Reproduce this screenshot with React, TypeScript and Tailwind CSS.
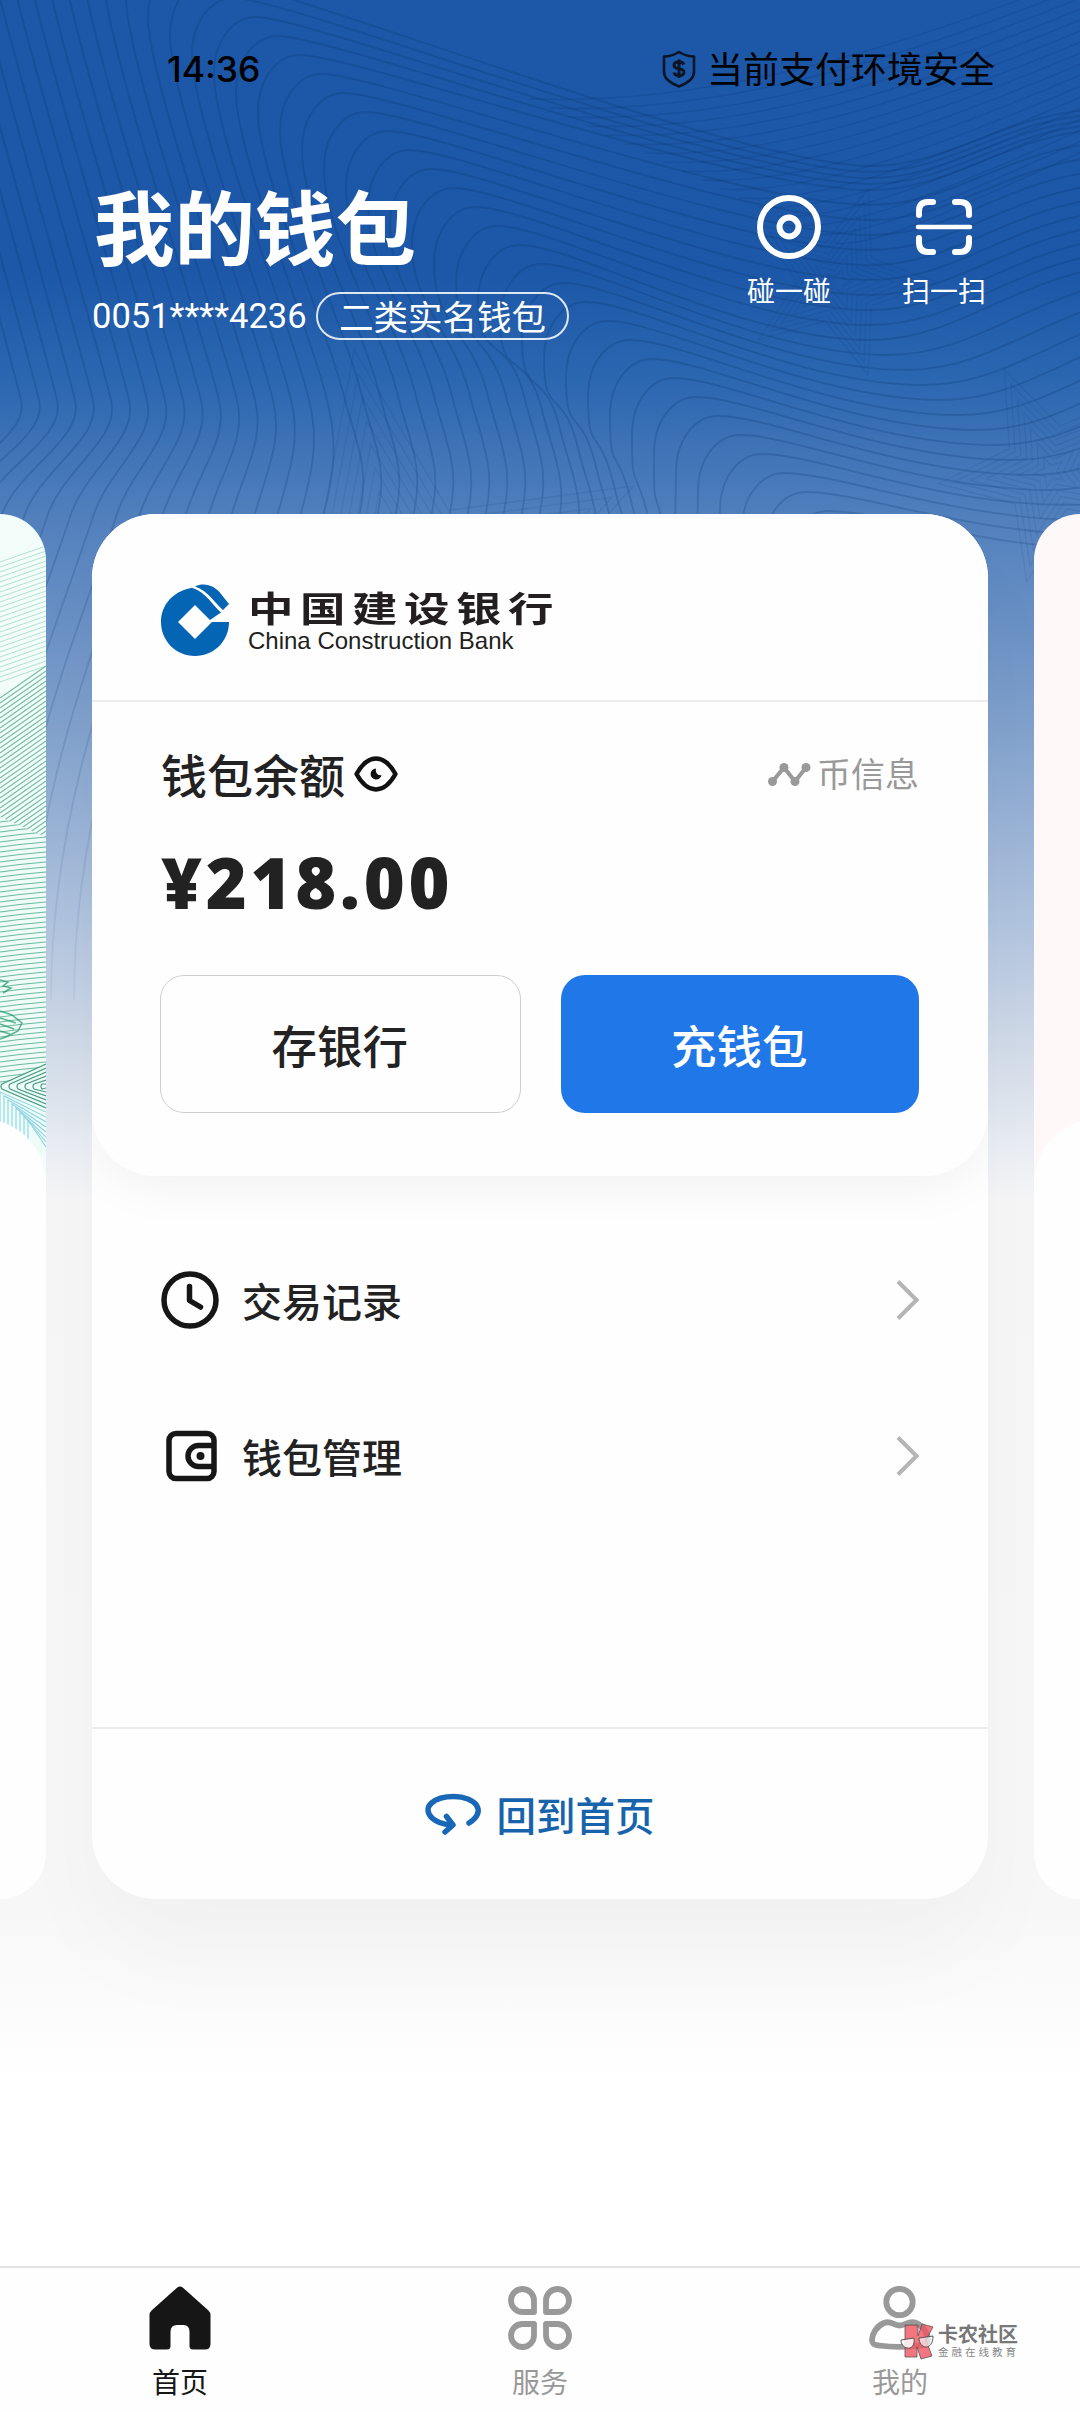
import React from 'react';

interface MenuRowProps {
  icon: React.ReactNode;
  label: string;
}

interface TabProps {
  icon: React.ReactNode;
  label: string;
  active?: boolean;
}

const range = (from: number, to: number) =>
  Array.from({ length: to - from + 1 }, (_, i) => from + i);

// Ridge contours: one arch per index, shifted along the diagonal
const ridgePath = (i: number) => {
  const px = 300 + 22 * i;
  const py = 55 + 19 * i;
  const x4 = 345 + 18 * i;
  const x5 = i < 0 ? x4 + 5 * i : x4 + 13;
  const y4 = Math.max(400, py + 150);
  const left = [
    `M${x5 - 110} 1000`,
    `C${x5 - 110} 800 ${x5 - 40} 640 ${x5} ${y4 + 120}`,
    `C${x5 + 14} ${y4 + 70} ${x4 + 10} ${y4 + 40} ${x4} ${y4}`,
    `C${x4 - 16} ${y4 - 70} ${px - 42} ${py + 120} ${px - 42} ${py + 57}`,
    `C${px - 42} ${py + 22} ${px - 22} ${py} ${px} ${py}`,
  ].join('');
  // the outer ridges leave the screen before they turn
  if (i < -4) return left;

  const sag = i < 0 ? 190 + 6 * i : 190 + 15 * i;
  const sagX = 870 + Math.max(0, i - 10) * 18;
  return `${left}C${px + 55} ${py} ${sagX - 130} ${sag} ${sagX} ${sag}C${sagX + 80} ${sag} ${sagX + 130} ${sag - 50} ${sagX + 220} ${sag - 60 - i}`;
};

// Tight lines that sweep up to the top right corner
const sweepPath = (j: number) =>
  `M${530 + 19 * j} ${99 + 9 * j}C${680 + 12 * j} ${104 + 9 * j} ${850 + 6 * j} ${70 + 9 * j} 1090 ${-28 + 11 * j}`;

const starPoints = (cx: number, cy: number, r: number, start: number) =>
  range(0, 9)
    .map(k => {
      const angle = ((start + k * 36) * Math.PI) / 180;
      const radius = k % 2 === 0 ? r : r * 0.42;
      return `${(cx + radius * Math.cos(angle)).toFixed(1)},${(cy + radius * Math.sin(angle)).toFixed(1)}`;
    })
    .join(' ');

const HeaderPattern: React.FC = () => (
  <svg className="absolute inset-x-0 top-0" width="1080" height="1200" viewBox="0 0 1080 1200" fill="none">
    <defs>
      <linearGradient id="fade" x1="0" y1="0" x2="0" y2="1">
        <stop offset="0.25" stopColor="#fff" />
        <stop offset="0.95" stopColor="#fff" stopOpacity="0" />
      </linearGradient>
      <mask id="fade-mask">
        <rect width="1080" height="1200" fill="url(#fade)" />
      </mask>
    </defs>
    <g mask="url(#fade-mask)">
      <g stroke="#0f3d78" strokeOpacity="0.32" strokeWidth="1.8">
        {range(-18, 24).map(i => <path key={i} d={ridgePath(i)} />)}
      </g>
      <g stroke="#0f3d78" strokeOpacity="0.22" strokeWidth="1.5">
        {range(0, 16).map(j => <path key={j} d={sweepPath(j)} />)}
      </g>
      <g stroke="#123f7c" strokeOpacity="0.16" strokeWidth="1.3">
        {range(1, 7).map(k => <polygon key={k} points={starPoints(838, 282, 14 * k, -72)} />)}
        {range(1, 7).map(k => <polygon key={k} points={starPoints(1050, 472, 16 * k, -114)} />)}
        {range(4, 11).map(k => <polygon key={k} points={starPoints(400, 610, 24 * k, -100)} />)}
      </g>
    </g>
  </svg>
);

// Guilloche artwork on the card that peeks in from the left
const GreenPattern: React.FC = () => (
  <svg className="absolute right-0 top-0" width="46" height="640" viewBox="0 0 46 640" fill="none">
    <clipPath id="waves">
      <path d="M0 303L46 323V552L0 573Z" />
    </clipPath>
    <g stroke="#9ad3c2" strokeWidth="1" strokeOpacity="0.7">
      {range(0, 24).map(i => <path key={i} d={`M0 ${48 + i * 5}L46 ${32 + i * 5}`} />)}
    </g>
    <g stroke="#4fa88b" strokeWidth="1.1" strokeOpacity="0.75">
      {range(0, 35).map(i => <path key={i} d={`M0 ${184 + i * 5}L46 ${152 + i * 5}`} />)}
    </g>
    <g clipPath="url(#waves)">
      <rect y="300" width="46" height="280" fill="#edfcf6" />
      <g stroke="#4fa88b" strokeWidth="1.1" strokeOpacity="0.8">
        {range(0, 54).map(i => <path key={i} d={`M0 ${308 + i * 5}Q22 ${305 + i * 5} 46 ${303 + i * 5}`} />)}
      </g>
    </g>
    <path d="M0 466l8 2-5 4 8 2-8 5M0 497l12 4 10 8-4 8-12 6-6 2M0 504l16 5M0 510l14 5M0 517l10 3" stroke="#1d9468" strokeWidth="1.5" strokeOpacity="0.7" />
    <path d="M0 572L46 550V640H0Z" fill="#edfcf6" />
    <g stroke="#4a9c84" strokeWidth="1.2">
      {range(0, 5).map(i => <path key={i} d={`M46 ${550 + i * 4}L${2 + i * 8} 570Q${i * 8} 572 ${2 + i * 8} 575L46 ${594 - i * 4}`} />)}
    </g>
    <g stroke="#8fd3e4" strokeWidth="1.1">
      {range(0, 7).map(i => <path key={i} d={`M${i * 4} 640V${578 + i * 4}L46 ${598 + i * 5}`} />)}
    </g>
  </svg>
);

const BankLogo: React.FC = () => (
  <svg className="shrink-0" width="68" height="72" viewBox="0 0 68 72">
    <path
      d="M28 4.500C12 8 0 21 0 38C0 57 15 72 34 72C53 72 68 57 68 38H51L34 55L17 38L34 21L49 36L60 28.500C52 22 45 8 31 3.800Z"
      fill="#0565b5"
    />
    <path d="M34 2.500C44-2 54 2 60 10L68 20L62 26C54 19 47 7 34 2.500Z" fill="#0565b5" />
  </svg>
);

const EyeIcon: React.FC = () => (
  <svg width="44" height="36" viewBox="0 0 44 36" fill="none">
    <path
      d="M2.500 18C7 10 13 2.500 22 2.500S37 10 41.500 18C37 26 31 33.500 22 33.500S7 26 2.500 18Z"
      stroke="#111"
      strokeWidth="4.400"
      strokeLinejoin="round"
    />
    <path d="M22 12.500A5.500 5.500 0 1 0 27.500 19C24 20 21 17 22 12.500Z" fill="#111" />
  </svg>
);

const TrendIcon: React.FC = () => (
  <svg width="44" height="25" viewBox="0 0 44 25" fill="#999">
    <path d="M5.500 19.500L17 5.500L28 19.500L39 5.500" fill="none" stroke="#999" strokeWidth="4" />
    <circle cx="5.500" cy="19.500" r="4.500" />
    <circle cx="17" cy="5.500" r="4.500" />
    <circle cx="28" cy="19.500" r="4.500" />
    <circle cx="39" cy="5.500" r="4.500" />
  </svg>
);

const ClockIcon: React.FC = () => (
  <svg width="58" height="58" viewBox="0 0 58 58" fill="none" stroke="#161616" strokeWidth="5.500" strokeLinecap="round" strokeLinejoin="round">
    <circle cx="29" cy="29" r="26" />
    <path d="M28.500 15.500V29.500L39.500 36" />
  </svg>
);

const WalletIcon: React.FC = () => (
  <svg width="58" height="58" viewBox="0 0 58 58" fill="none" stroke="#161616" strokeWidth="5.500">
    <rect x="8" y="6.500" width="45" height="45" rx="7" />
    <path d="M53 18.500H37.500A10.500 10.500 0 0 0 37.500 39.500H53" />
    <circle cx="39.500" cy="29" r="4" fill="#161616" stroke="none" />
  </svg>
);

const Chevron: React.FC = () => (
  <svg width="26" height="42" viewBox="0 0 26 42" fill="none" stroke="#b5b5b5" strokeWidth="4">
    <path d="M3 2.500L21.500 21L3 39.500" />
  </svg>
);

const HomeIcon: React.FC = () => (
  <svg width="64" height="64" viewBox="0 0 64 64">
    <path
      d="M29 1.800Q32-.6 35 1.800L60.500 24.500Q62.500 26.500 62.500 29V58Q62.500 63.500 57 63.500H45Q41.500 63.500 41.500 60V46Q41.500 39 35.500 39H29Q22.500 39 22.500 46V60Q22.500 63.500 19 63.500H7.500Q1.500 63.500 1.500 58V29Q1.500 26.500 3.500 24.500Z"
      fill="#161616"
    />
  </svg>
);

const ServiceIcon: React.FC = () => (
  <svg width="64" height="64" viewBox="0 0 64 64" fill="none" stroke="#999" strokeWidth="5.800" strokeLinejoin="round">
    <path d="M26 26H14.500A11.500 11.500 0 1 1 26 14.500Z" />
    <path d="M38 26H49.500A11.500 11.500 0 1 0 38 14.500Z" />
    <path d="M26 38H14.500A11.500 11.500 0 1 0 26 49.500Z" />
    <path d="M38 38H49.500A11.500 11.500 0 1 1 38 49.500Z" />
  </svg>
);

const UserIcon: React.FC = () => (
  <svg width="64" height="64" viewBox="0 0 64 64" fill="none" stroke="#999" strokeWidth="5.800">
    <circle cx="31.500" cy="16" r="13.200" />
    <path d="M16 37C23 34 25 39.500 31.500 39.500S41 34 48 37C56 40.500 60 48 60 54C60 58 57 59 52 59.500C38 61.500 25 61.500 11 59.500C6 59 4 58 4 54C4 48 8 40.500 16 37Z" />
  </svg>
);

const MenuRow: React.FC<MenuRowProps> = ({ icon, label }) => (
  <div className="flex h-[156px] items-center pl-[69px] pr-[67px]">
    {icon}
    <span className="ml-[23px] flex-1 text-[40px] leading-none font-medium text-[#222]">{label}</span>
    <Chevron />
  </div>
);

const Tab: React.FC<TabProps> = ({ icon, label, active }) => (
  <div className="flex flex-1 flex-col items-center pt-[18px]">
    {icon}
    <span className={`mt-[15px] text-[28px] leading-[32px] ${active ? 'text-[#161616]' : 'text-[#999]'}`}>
      {label}
    </span>
  </div>
);

const App: React.FC = () => {
  return (
    <div className='relative flex h-[2412px] w-[1080px] flex-col overflow-hidden bg-[linear-gradient(180deg,#1c57a8_0px,#1c57a8_270px,#2a66b0_375px,#5280bd_520px,#7b9dca_700px,#b0c3de_920px,#cfd9e7_1040px,#e8ecf3_1140px,#f6f6f7_1200px,#f7f7f7_1900px,#fbfbfb_2000px,#ffffff_2080px)] font-["Noto_Sans_CJK_SC",sans-serif]'>
      <HeaderPattern />

      {/* Status bar */}
      <div className="relative flex h-[140px] items-center justify-between pl-[167px] pr-[85px] text-black">
        <span className='text-[35.500px] leading-none font-medium font-["Inter",sans-serif]'>14:36</span>
        <div className="flex items-center gap-[11px] pb-[2px]">
          <svg width="34" height="38" viewBox="0 0 34 38" fill="none" stroke="#0b1526" strokeWidth="2.600" strokeLinejoin="round">
            <path d="M17 2C12 5 7 6.500 2 6.500V22C2 29 8 33 17 36.500C26 33 32 29 32 22V6.500C27 6.500 22 5 17 2Z" />
            <path d="M22 14.500C21 12.500 19.500 12 17 12C14 12 12 13 12 15.500C12 20.500 22 17 22 22C22 24.500 20 25.500 17 25.500C14.500 25.500 12.500 25 12 22.500M17 9.500V28" strokeWidth="3" />
          </svg>
          <span className="pb-[4px] text-[36px] leading-none">当前支付环境安全</span>
        </div>
      </div>

      {/* Header */}
      <header className="relative flex h-[374px] justify-between pl-[92px] pr-[94px] text-white">
        <div className="pt-[41px]">
          <h1 className="pl-[2px] text-[80.500px] leading-[86px] font-bold">我的钱包</h1>
          <div className="mt-[25px] flex items-center">
            <span className='w-[224px] text-[34.500px] leading-none whitespace-nowrap font-["Roboto",sans-serif]'>0051****4236</span>
            <span className="flex h-[48px] w-[253px] items-center justify-center rounded-full border-2 border-white/85 pb-[2px] text-[34.500px] leading-none">
              二类实名钱包
            </span>
          </div>
        </div>
        <div className="flex gap-[71px] pt-[55px]">
          <div className="flex flex-col items-center">
            <svg width="64" height="64" viewBox="0 0 64 64" fill="none" stroke="#fff" strokeWidth="6">
              <circle cx="32" cy="32" r="29" />
              <circle cx="32" cy="32" r="9.500" />
            </svg>
            <span className="mt-[15px] text-[28px] leading-[32px]">碰一碰</span>
          </div>
          <div className="flex flex-col items-center">
            <svg width="64" height="64" viewBox="0 0 64 64" fill="none" stroke="#fff" strokeWidth="6" strokeLinecap="round">
              <path d="M7 20V16Q7 7 16 7H21M43 7H48Q57 7 57 16V20M57 43V47Q57 57 48 57H43M21 57H16Q7 57 7 47V43" />
              <path d="M6 32H58" strokeWidth="4.500" />
            </svg>
            <span className="mt-[15px] text-[28px] leading-[32px]">扫一扫</span>
          </div>
        </div>
      </header>

      {/* Wallet carousel */}
      <main className="relative flex h-[1385px] shrink-0 justify-between">
        <div className="relative w-[46px] overflow-hidden rounded-tr-[64px] rounded-br-[64px] bg-[#f2fdf9]">
          <GreenPattern />
          <div className="absolute right-0 top-[605px] h-[780px] w-[896px] rounded-t-[64px] bg-[#fefefe]" />
        </div>

        <section className="flex w-[896px] flex-col overflow-hidden rounded-[64px] bg-[#fefefe] shadow-[0_60px_100px_rgba(0,0,0,0.028)]">
          <div className="relative h-[662px] shrink-0 rounded-b-[64px] bg-[#fefefe] shadow-[0_10px_50px_rgba(0,0,0,0.05)]">
            <div className="flex h-[188px] items-center gap-[19px] border-b-2 border-[#ececec] pl-[69px] pt-[26px]">
              <BankLogo />
              <div className="flex w-[310px] flex-col pt-[2px]">
                <span className="origin-left scale-x-[1.3] text-[35px] leading-[37px] font-bold tracking-[5px] whitespace-nowrap text-[#231f20]">
                  中国建设银行
                </span>
                <span className='mt-[3px] text-[24px] leading-[26px] whitespace-nowrap text-[#231f20] font-["Liberation_Sans",sans-serif]'>
                  China Construction Bank
                </span>
              </div>
            </div>
            <div className="flex items-center pl-[69px] pr-[69px] pt-[49px]">
              <span className="pb-[2px] text-[46px] leading-[44px] font-medium text-[#222]">钱包余额</span>
              <span className="ml-[9px]"><EyeIcon /></span>
              <div className="ml-auto flex items-center gap-[6px] text-[#999]">
                <TrendIcon />
                <span className="pb-[2px] text-[34px] leading-none">币信息</span>
              </div>
            </div>
            <div className='pl-[69px] pt-[35px] text-[70px] leading-[100px] font-extrabold tracking-[3.700px] text-[#222] font-["Open_Sans",sans-serif]'>
              ¥218.00
            </div>
            <div className="mt-[43px] flex gap-[40px] pl-[68px] pr-[69px]">
              <button className="h-[138px] flex-1 rounded-[24px] border border-[#cfcfcf] pr-[1px] text-[45.500px] font-medium text-[#222]">
                存银行
              </button>
              <button className="h-[138px] flex-1 rounded-[24px] bg-[#1f77e8] pr-[1px] text-[45.500px] font-medium text-white">
                充钱包
              </button>
            </div>
          </div>
          <div className="flex-1 pt-[46px]">
            <MenuRow icon={<ClockIcon />} label="交易记录" />
            <MenuRow icon={<WalletIcon />} label="钱包管理" />
          </div>
          <div className="flex h-[172px] items-center justify-center gap-[14px] border-t-2 border-[#ececec] pr-[1px] text-[#1764ad]">
            <svg width="58" height="42" viewBox="0 0 58 42" fill="none" stroke="#1968b8" strokeWidth="5.500" strokeLinecap="round" strokeLinejoin="round">
              <path d="M44 30C63 18 50 3.500 29 3.500C9 3.500-4 14 7 25C12 29.500 19 31.500 26 32" />
              <path d="M21.500 23.500L28 32L20 39" />
            </svg>
            <span className="text-[39.500px] leading-none font-medium">回到首页</span>
          </div>
        </section>

        <div className="relative w-[46px] overflow-hidden rounded-tl-[64px] rounded-bl-[64px] bg-[#fef8f9]">
          <div className="absolute left-0 top-[605px] h-[780px] w-[896px] rounded-t-[64px] bg-[#fefefe]" />
        </div>
      </main>

      {/* Tab bar */}
      <nav className="relative mt-auto flex h-[146px] border-t-2 border-[#e2e2e2] bg-[#fefefe]">
        <Tab icon={<HomeIcon />} label="首页" active />
        <Tab icon={<ServiceIcon />} label="服务" />
        <Tab icon={<UserIcon />} label="我的" />

        {/* Community badge over the last tab */}
        <div className="absolute left-[900px] top-[54px] flex items-center gap-[4px]">
          <svg width="34" height="38" viewBox="0 0 34 38">
            <path d="M5 3H18V14L22 2L33 5L26 18L32 34L21 37L17 25V35H5Z" fill="#f0525f" fillOpacity="0.8" stroke="#555" strokeWidth="0.8" />
            <path d="M1 18L14 16C15 24 11 27 7 26C3 25 1 22 1 18Z" fill="#fff" fillOpacity="0.85" stroke="#555" />
            <path d="M19 16L33 14C33 21 30 25 26 25C22 25 19 21 19 16Z" fill="#fff" fillOpacity="0.65" stroke="#555" />
          </svg>
          <div className="flex flex-col whitespace-nowrap">
            <span className="text-[20px] leading-[20px] font-bold text-[#777]">卡农社区</span>
            <span className="mt-[2px] text-[10.500px] leading-[12px] tracking-[3px] text-[#888]">金融在线教育</span>
          </div>
        </div>
      </nav>
    </div>
  );
};

export default App;
